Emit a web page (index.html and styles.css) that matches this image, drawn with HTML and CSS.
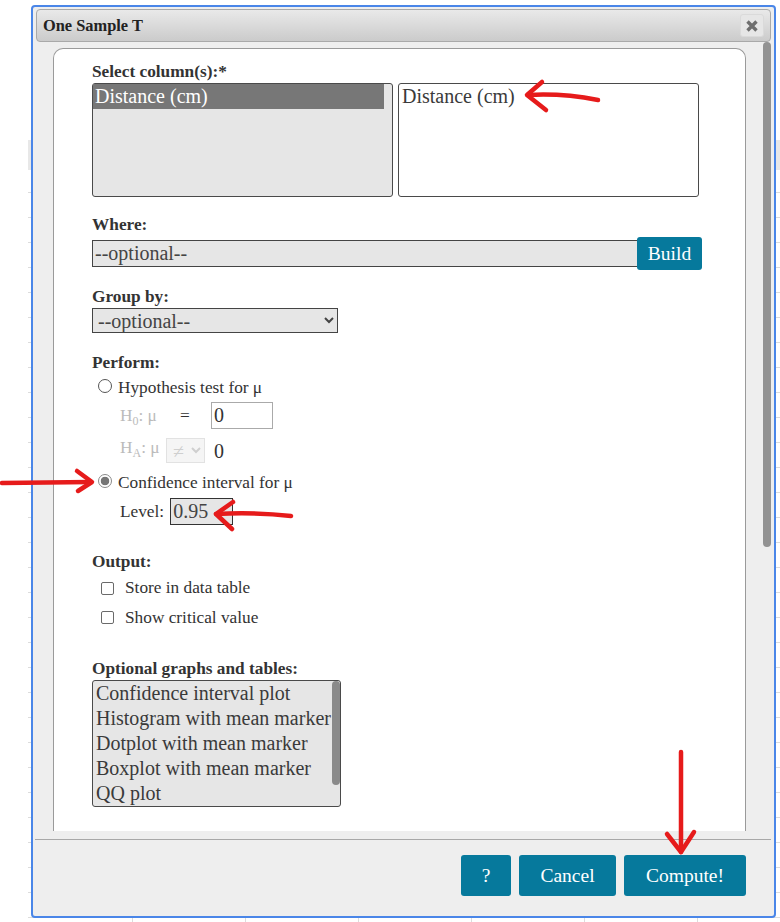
FILE: index.html
```html
<!DOCTYPE html>
<html lang="en">
<head>
    <meta charset="UTF-8">
    <meta name="viewport" content="width=device-width, initial-scale=1.0">
    <title>One Sample T</title>
    <link rel="stylesheet" href="styles.css">
</head>
<body>
    <!-- spreadsheet grid behind the dialog -->
    <div class="sheet">
        <div class="sheet-head"></div>
    </div>

    <div class="dialog">
        <div class="titlebar">
            <span class="title">One Sample T</span>
            <button class="close" type="button">
                <svg width="14" height="14" viewBox="0 0 14 14">
                    <path d="M2.5 2.5 L11.5 11.5 M11.5 2.5 L2.5 11.5" stroke="#6e6e6e" stroke-width="3.4" stroke-linecap="butt"/>
                </svg>
            </button>
        </div>

        <div class="dialog-body">
            <div class="panel">
                <div class="group">
                    <label class="field-label">Select column(s):*</label>
                    <div class="col-lists">
                        <div class="listbox source">
                            <div class="opt selected">Distance (cm)</div>
                        </div>
                        <div class="listbox target">
                            <div class="opt">Distance (cm)</div>
                        </div>
                    </div>
                </div>

                <div class="group group-where">
                    <label class="field-label" for="where">Where:</label>
                    <div class="where-row">
                        <input type="text" id="where" class="where-input" placeholder="--optional--">
                        <button class="btn build" type="button">Build</button>
                    </div>
                </div>

                <div class="group group-by">
                    <label class="field-label" for="groupby">Group by:</label>
                    <select id="groupby" class="groupby">
                        <option>--optional--</option>
                    </select>
                </div>

                <div class="group group-perform">
                    <label class="field-label">Perform:</label>
                    <div class="radio-row first">
                        <input type="radio" name="perform" id="hyp">
                        <label for="hyp">Hypothesis test for μ</label>
                    </div>
                    <div class="sub-row h0-row">
                        <span class="hyp-label h0">H<sub>0</sub>: μ</span>
                        <span class="eq">=</span>
                        <input type="text" class="null-value" value="0">
                    </div>
                    <div class="sub-row ha-row">
                        <span class="hyp-label ha">H<sub>A</sub>: μ</span>
                        <select class="alt" disabled>
                            <option>≠</option>
                        </select>
                        <span class="alt-value">0</span>
                    </div>
                    <div class="radio-row second">
                        <input type="radio" name="perform" id="ci" checked>
                        <label for="ci">Confidence interval for μ</label>
                    </div>
                    <div class="sub-row level-row">
                        <span>Level:</span>
                        <input type="text" class="level" value="0.95">
                    </div>
                </div>

                <div class="group group-output">
                    <label class="field-label">Output:</label>
                    <div class="check-row first">
                        <input type="checkbox" id="store">
                        <label for="store">Store in data table</label>
                    </div>
                    <div class="check-row second">
                        <input type="checkbox" id="critical">
                        <label for="critical">Show critical value</label>
                    </div>
                </div>

                <div class="group group-graphs">
                    <label class="field-label">Optional graphs and tables:</label>
                    <div class="listbox graphs">
                        <div class="graph-items">
                            <div class="opt">Confidence interval plot</div>
                            <div class="opt">Histogram with mean marker</div>
                            <div class="opt">Dotplot with mean marker</div>
                            <div class="opt">Boxplot with mean marker</div>
                            <div class="opt">QQ plot</div>
                        </div>
                        <div class="list-thumb"></div>
                    </div>
                </div>
            </div>
            <div class="scroll-track">
                <div class="scroll-thumb"></div>
            </div>
        </div>

        <div class="footer">
            <button class="btn help" type="button">?</button>
            <button class="btn cancel" type="button">Cancel</button>
            <button class="btn compute" type="button">Compute!</button>
        </div>
    </div>

    <!-- hand-drawn red pointers on top of the form -->
    <svg class="marks" width="780" height="922" viewBox="0 0 780 922">
        <g fill="none" stroke="#e61b1b" stroke-width="4.5" stroke-linecap="round" stroke-linejoin="round">
            <path d="M598 100 Q562 93 528 95"/>
            <path d="M542 82 L527 95 L546 110"/>
            <path d="M2 483 L91 482"/>
            <path d="M77 471 L92 482 L78 491"/>
            <path d="M291 516 Q255 512 216 514"/>
            <path d="M233 502 L216 514 L232 529"/>
            <path d="M681 752 L681 852"/>
            <path d="M667 834 L681 852 L694 832"/>
        </g>
    </svg>
</body>
</html>
```

FILE: styles.css
```css
body {
    margin: 0;
    background-color: #fff;
    font-family: "Liberation Serif", "Times New Roman", serif;
    color: #333;
    width: 780px;
    height: 922px;
    overflow: hidden;
}
.sheet {
    margin: 140px 0 0 28px;
    height: 782px;
    background-image:
        linear-gradient(#dcdcdc 1px, transparent 1px),
        linear-gradient(90deg, #dcdcdc 1px, transparent 1px);
    background-size: 113px 25px;
    background-position: 104px 2px, 104px 2px;
}
.sheet-head {
    margin-top: 22px;
    height: 30px;
    background-color: #e8e8e8;
}
.dialog {
    position: absolute;
    left: 31px;
    top: 5px;
    width: 745px;
    height: 913px;
    box-sizing: border-box;
    border: 2px solid #4a86e8;
    border-radius: 4px;
    background-color: #eee;
    display: flex;
    flex-direction: column;
}
.titlebar {
    margin: 2px 3px 0 3px;
    height: 33px;
    box-sizing: border-box;
    border: 1px solid #a9a9a9;
    border-radius: 4px;
    background: linear-gradient(#e9e9e9, #cbcbcb);
    display: flex;
    align-items: center;
    padding-left: 6px;
}
.title {
    flex: 1;
    font-weight: bold;
    font-size: 16.4px;
    line-height: 18px;
    color: #222;
}
.close {
    width: 24px;
    height: 23px;
    margin-right: 6px;
    padding: 0;
    border: 1px solid #dadada;
    border-radius: 3px;
    background-color: #e6e6e6;
    display: flex;
    align-items: center;
    justify-content: center;
}
.dialog-body {
    display: flex;
    height: 789px;
}
.panel {
    margin: 6px 0 0 20px;
    width: 693px;
    height: 783px;
    box-sizing: border-box;
    border: 1px solid #9a9a9a;
    border-bottom: none;
    border-radius: 10px 10px 0 0;
    background-color: #fff;
    padding: 13px 0 0 38px;
    overflow: hidden;
}
.scroll-track {
    margin-left: 17px;
    width: 8px;
}
.scroll-thumb {
    height: 505px;
    border-radius: 4px;
    background-color: #929292;
}
.field-label {
    display: block;
    font-weight: bold;
    font-size: 17.3px;
    line-height: 20px;
    color: #333;
}

/* column pickers */
.col-lists {
    display: flex;
    gap: 5px;
    margin-top: 1px;
}
.listbox {
    box-sizing: border-box;
    border: 1px solid #4a4a4a;
    border-radius: 3px;
    font-size: 20px;
    line-height: 25px;
    color: #3a3a3a;
}
.listbox.source,
.listbox.target {
    width: 301px;
    height: 114px;
}
.listbox.source {
    background-color: #e6e6e6;
}
.listbox.target {
    background-color: #fff;
}
.opt {
    height: 25px;
    padding-left: 3px;
    white-space: nowrap;
}
.source .opt.selected {
    margin-right: 8px;
    padding-left: 2px;
    background-color: #777;
    color: #fff;
}

/* where clause */
.group-where {
    margin-top: 18px;
}
.where-row {
    display: flex;
    align-items: center;
    margin-top: 2px;
    height: 33px;
}
.where-input {
    width: 546px;
    height: 27px;
    box-sizing: border-box;
    border: 1px solid #444;
    background-color: #e6e6e6;
    font-family: inherit;
    font-size: 20px;
    padding: 0 2px;
    color: #444;
}
.where-input::placeholder {
    color: #444;
}
.btn {
    border: none;
    border-radius: 3px;
    background-color: #06799c;
    color: #fff;
    font-family: inherit;
    font-size: 19.5px;
    padding: 0;
    cursor: pointer;
}
.btn.build {
    margin-left: -1px;
    width: 65px;
    height: 33px;
}

/* group by */
.group-by {
    margin-top: 17px;
}
.groupby {
    display: block;
    margin-top: 1px;
    width: 246px;
    height: 25px;
    box-sizing: border-box;
    border: 1px solid #444;
    border-radius: 0;
    background-color: #e6e6e6;
    font-family: inherit;
    font-size: 20px;
    padding: 0 0 0 1px;
    color: #444;
}

/* perform */
.group-perform {
    margin-top: 20px;
    font-size: 17.3px;
}
.radio-row,
.check-row {
    display: flex;
    align-items: center;
    height: 20px;
    line-height: 20px;
}
.radio-row {
    padding-left: 6px;
}
.radio-row.first {
    margin-top: 4.5px;
}
.radio-row.second {
    margin-top: 10px;
}
.radio-row input {
    appearance: none;
    margin: 0 6px 0 0;
    width: 14px;
    height: 14px;
    border: 1px solid #555;
    border-radius: 50%;
    background-color: #fff;
    position: relative;
    top: -2px;
}
.radio-row input:checked {
    border-color: #8a8a8a;
    background: radial-gradient(circle, #767676 0 4px, #fff 4.6px);
}
.sub-row {
    display: flex;
    align-items: center;
    padding-left: 28px;
    line-height: 20px;
}
.h0-row {
    margin-top: 4.5px;
    height: 27px;
}
.ha-row {
    margin-top: 9px;
    height: 25px;
}
.level-row {
    margin-top: 5px;
    height: 27px;
}
.hyp-label {
    color: #bbb;
}
.hyp-label sub {
    font-size: 12px;
    line-height: 0;
}
.hyp-label.h0 {
    width: 60px;
}
.hyp-label.ha {
    width: 46px;
    align-self: flex-start;
}
.eq {
    width: 31px;
}
.null-value {
    width: 62px;
    height: 27px;
    box-sizing: border-box;
    border: 1px solid #aaa;
    font-family: inherit;
    font-size: 20px;
    padding: 0 2px;
    color: #333;
}
.alt {
    width: 39px;
    height: 25px;
    box-sizing: border-box;
    border: 1px solid #d6d6d6;
    border-radius: 0;
    background-color: #f2f2f2;
    font-family: inherit;
    font-size: 20px;
    padding: 0 0 0 2px;
    color: #bbb;
}
.alt-value {
    margin-left: 9px;
    font-size: 20px;
}
.level {
    margin-left: 6px;
    width: 63px;
    height: 27px;
    box-sizing: border-box;
    border: 1px solid #333;
    background-color: #e6e6e6;
    font-family: inherit;
    font-size: 20px;
    padding: 0 2px;
    color: #444;
}

/* output */
.group-output {
    margin-top: 26.5px;
    font-size: 17.3px;
}
.check-row {
    padding-left: 9px;
}
.check-row.first {
    margin-top: 6.5px;
}
.check-row.second {
    margin-top: 9.5px;
}
.check-row input {
    appearance: none;
    margin: 0 11px 0 0;
    width: 13px;
    height: 13px;
    border: 1px solid #6a6a6a;
    border-radius: 2px;
    background-color: #fff;
}

/* graphs */
.group-graphs {
    margin-top: 31.5px;
}
.listbox.graphs {
    margin-top: 1px;
    width: 249px;
    height: 127px;
    background-color: #e6e6e6;
    display: flex;
    overflow: hidden;
}
.graph-items {
    flex: 1;
}
.graphs .opt {
    padding-left: 3px;
}
.list-thumb {
    width: 8px;
    height: 104px;
    border-radius: 4px;
    background-color: #8a8a8a;
}

/* footer buttons */
.footer {
    margin: 8px 3px 0 2px;
    border-top: 1px solid #a8a8a8;
    padding: 15px 25px 0 0;
    display: flex;
    justify-content: flex-end;
    gap: 8px;
}
.footer .btn {
    height: 41px;
}
.btn.help {
    width: 50px;
}
.btn.cancel {
    width: 97px;
}
.btn.compute {
    width: 122px;
}

.marks {
    position: absolute;
    left: 0;
    top: 0;
    pointer-events: none;
}
```
